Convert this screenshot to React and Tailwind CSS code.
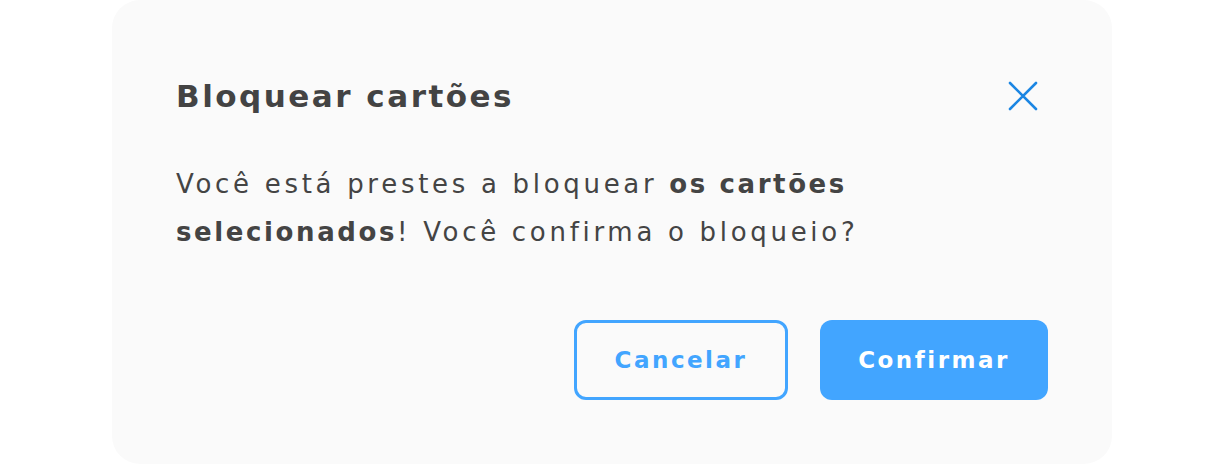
import React from "react";

export default function App() {
  return (
    <div className="min-h-[464px] w-full bg-white flex justify-center" style={{ fontFamily: '"DejaVu Sans", sans-serif' }}>
      <div className="w-[1000px] h-[464px] rounded-[28px] bg-[#fafafa] px-16 pt-[72px] pb-16 flex flex-col">
        {/* Header */}
        <div className="flex items-center justify-between h-12">
          <h2 className="text-[31px] font-bold text-[#434343] tracking-[2.5px]">Bloquear cartões</h2>
          <button className="w-10 h-10 flex items-center justify-center mr-[5px]">
            <svg width="30" height="30" viewBox="0 0 30 30" fill="none">
              <path d="M2 2 L28 28 M28 2 L2 28" stroke="#1b86e3" strokeWidth="2.6" strokeLinecap="round" />
            </svg>
          </button>
        </div>

        {/* Body */}
        <p className="mt-10 text-[26px] leading-[48px] text-[#444444] tracking-[3.7px] max-w-[720px]">
          Você está prestes a bloquear <span className="font-bold tracking-[2.6px]">os cartões selecionados</span>! Você confirma o bloqueio?
        </p>

        {/* Actions */}
        <div className="mt-auto flex justify-end gap-8">
          <button className="w-[214px] h-20 rounded-xl border-[3px] border-[#42a5ff] text-[#42a5ff] text-[23px] font-bold tracking-[2.5px]">
            Cancelar
          </button>
          <button className="w-[228px] h-20 rounded-xl bg-[#42a5ff] text-white text-[23px] font-bold tracking-[2.5px]">
            Confirmar
          </button>
        </div>
      </div>
    </div>
  );
}
